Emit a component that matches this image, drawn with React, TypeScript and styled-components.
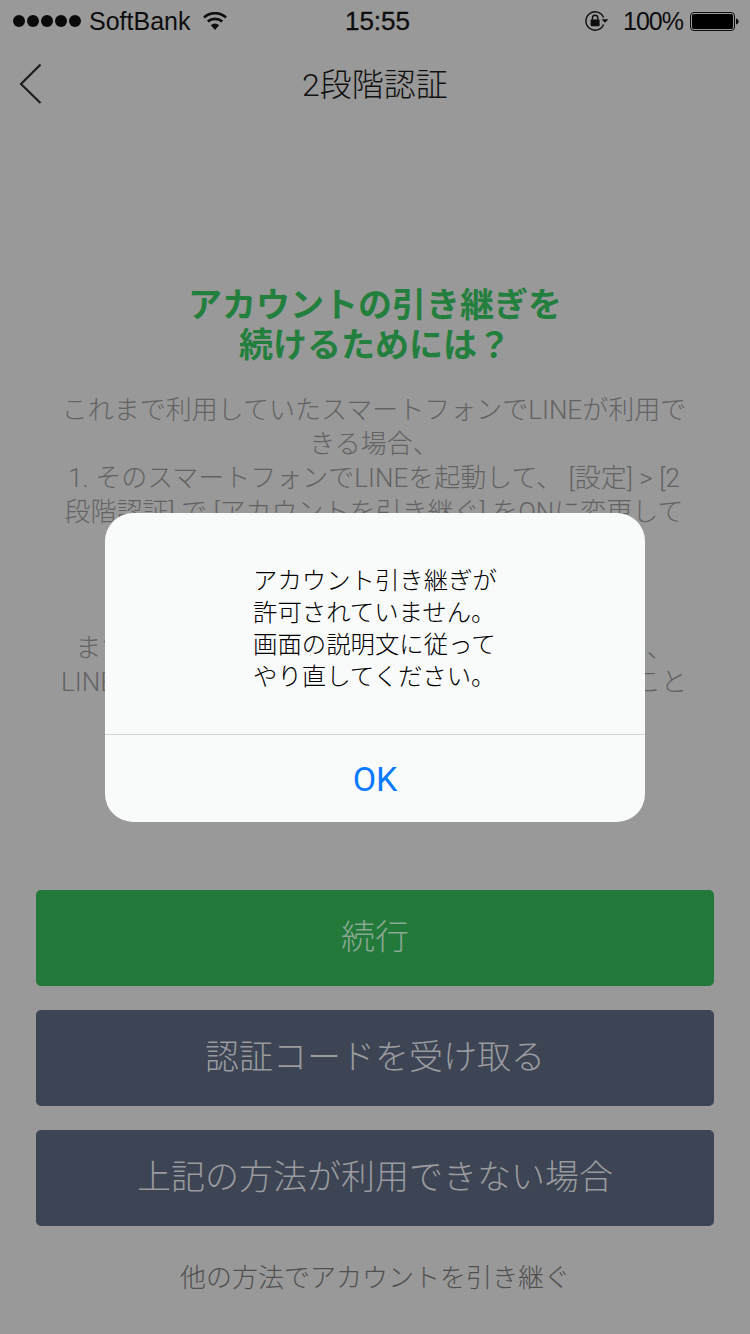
import React from "react";
import styled, { createGlobalStyle } from "styled-components";

const GlobalStyle = createGlobalStyle`
  html, body {
    margin: 0;
    padding: 0;
    background: #999999;
  }
  * {
    box-sizing: border-box;
  }
`;

const FONT = `"Liberation Sans", "Noto Sans CJK JP", sans-serif`;
const LIGHT_FONT = `Roboto, "Noto Sans CJK JP", sans-serif`;

const Screen = styled.div`
  position: relative;
  width: 750px;
  height: 1334px;
  overflow: hidden;
  display: flex;
  flex-direction: column;
  background: #999999;
  font-family: ${FONT};
`;

const StatusBar = styled.div`
  height: 40px;
  padding: 2px 11px 0 13px;
  display: grid;
  grid-template-columns: 1fr auto 1fr;
  align-items: center;
  color: #0d0d0d;
  font-size: 25px;
`;

const StatusLeft = styled.div`
  display: flex;
  align-items: center;
`;

const Dots = styled.div`
  display: flex;
  gap: 2px;
  margin-right: 8px;
`;

const Dot = styled.span`
  width: 12px;
  height: 12px;
  border-radius: 50%;
  background: #0a0a0a;
`;

const Carrier = styled.span`
  margin-right: 13px;
`;

const Clock = styled.span`
  padding-left: 3px;
  font-size: 26px;
  font-weight: 500;
  -webkit-text-stroke: 0.3px #0d0d0d;
`;

const StatusRight = styled.div`
  display: flex;
  align-items: center;
  justify-content: flex-end;
`;

const Percent = styled.span`
  margin: 0 7px 0 14px;
  letter-spacing: -1px;
`;

const NavBar = styled.div`
  position: relative;
  height: 88px;
  display: flex;
  align-items: center;
  justify-content: center;
`;

const BackButton = styled.button`
  position: absolute;
  left: 18px;
  top: 22px;
  width: 26px;
  height: 44px;
  padding: 0;
  border: 0;
  background: none;
`;

const Title = styled.h1`
  margin: 0;
  padding-top: 2px;
  font-family: ${LIGHT_FONT};
  font-size: 32px;
  font-weight: 300;
  line-height: 44px;
  color: #111111;
`;

const Content = styled.main`
  flex: 1;
  padding: 157px 48px 0;
  text-align: center;
`;

const Heading = styled.h2`
  margin: 0 0 28px;
  font-size: 34px;
  line-height: 40px;
  font-weight: 700;
  color: #237f3d;
`;

const BodyLine = styled.p`
  margin: 0;
  height: 34px;
  padding-right: 2px;
  font-family: ${LIGHT_FONT};
  font-size: 26px;
  font-weight: 300;
  line-height: 34px;
  white-space: nowrap;
  color: #636363;
  display: flex;
  justify-content: center;
`;

const Actions = styled.div`
  padding: 0 36px;
  display: flex;
  flex-direction: column;
  gap: 24px;
`;

const ActionButton = styled.button<{ $tone: "green" | "navy" }>`
  height: 96px;
  padding: 0 0 8px;
  border: 0;
  border-radius: 5px;
  font-family: ${FONT};
  font-size: 34px;
  font-weight: 300;
  background: ${(p) => (p.$tone === "green" ? "#22793a" : "#3d4454")};
  color: ${(p) => (p.$tone === "green" ? "#8aa892" : "#999b9f")};
`;

const FooterLink = styled.a`
  display: block;
  height: 108px;
  padding-top: 32px;
  text-align: center;
  font-size: 26px;
  font-weight: 300;
  line-height: 40px;
  color: #505050;
`;

const Scrim = styled.div`
  position: absolute;
  inset: 0;
  display: flex;
  align-items: center;
  justify-content: center;
`;

const Dialog = styled.div`
  width: 540px;
  height: 309px;
  display: flex;
  flex-direction: column;
  border-radius: 28px;
  background: #f9fafa;
`;

const DialogMessage = styled.div`
  height: 222px;
  padding: 52px 0 0 148px;
  border-bottom: 1px solid #d3d4da;
  font-size: 24.4px;
  font-weight: 300;
  line-height: 32px;
  color: #000000;
`;

const MessageLine = styled.div`
  white-space: nowrap;
`;

const DialogButton = styled.button`
  flex: 1;
  padding: 1px 0 0;
  border: 0;
  background: none;
  font-family: Roboto, sans-serif;
  font-size: 34px;
  color: #0a7aff;
`;

const WifiIcon = () => (
  <svg width="24" height="18" viewBox="0 0 24 18">
    <path d="M12 18 7.8 13.2a6.2 6.2 0 0 1 8.4 0Z" fill="#0d0d0d" />
    <path d="M4.8 9.6a11 11 0 0 1 14.4 0" fill="none" stroke="#0d0d0d" strokeWidth="2.7" />
    <path d="M1 5.4a16.6 16.6 0 0 1 22 0" fill="none" stroke="#0d0d0d" strokeWidth="2.7" />
  </svg>
);

const RotationLockIcon = () => (
  <svg width="24" height="20" viewBox="0 0 24 20">
    <path d="M18.6 13.6A9.2 9.2 0 1 1 18.6 6.4" fill="none" stroke="#0d0d0d" strokeWidth="1.4" />
    <path d="M16.6 8.2h6.8l-3.4 3.6Z" fill="#0d0d0d" />
    <rect x="5.6" y="8.6" width="9" height="6.6" rx="1" fill="#0d0d0d" />
    <path d="M7.4 8.8V7a2.7 2.7 0 0 1 5.4 0v1.8" fill="none" stroke="#0d0d0d" strokeWidth="1.4" />
  </svg>
);

const BatteryIcon = () => (
  <svg width="49" height="19" viewBox="0 0 49 19">
    <rect x="0.5" y="0.5" width="44" height="18" rx="3.5" fill="none" stroke="#0d0d0d" />
    <rect x="2" y="2" width="41" height="15" rx="2" fill="#000" />
    <path d="M46 6.5c1.6.3 2.6 1.5 2.6 3s-1 2.7-2.6 3Z" fill="#0d0d0d" />
  </svg>
);

const BackChevron = () => (
  <svg width="26" height="44" viewBox="0 0 26 44">
    <path d="M22.5 2.5 3 22l19.5 19" fill="none" stroke="#1e1e1e" strokeWidth="2.2" />
  </svg>
);

// lines sitting fully behind the dialog are left empty
const bodyLines = [
  "これまで利用していたスマートフォンでLINEが利用で",
  "きる場合、",
  "1. そのスマートフォンでLINEを起動して、 [設定] > [2",
  "段階認証] で [アカウントを引き継ぐ] をONに変更して",
  "",
  "",
  "",
  "また、以前登録した電話番号が利用できる場合は、",
  "LINEに登録した電話番号で認証コードを受け取ること",
];

const messageLines = [
  "アカウント引き継ぎが",
  "許可されていません。",
  "画面の説明文に従って",
  "やり直してください。",
];

const App = () => {
  return (
    <Screen>
      <GlobalStyle />
      <StatusBar>
        <StatusLeft>
          <Dots>
            {[0, 1, 2, 3, 4].map((i) => (
              <Dot key={i} />
            ))}
          </Dots>
          <Carrier>SoftBank</Carrier>
          <WifiIcon />
        </StatusLeft>
        <Clock>15:55</Clock>
        <StatusRight>
          <RotationLockIcon />
          <Percent>100%</Percent>
          <BatteryIcon />
        </StatusRight>
      </StatusBar>
      <NavBar>
        <BackButton aria-label="back">
          <BackChevron />
        </BackButton>
        <Title>2段階認証</Title>
      </NavBar>
      <Content>
        <Heading>
          アカウントの引き継ぎを
          <br />
          続けるためには？
        </Heading>
        {bodyLines.map((line, i) => (
          <BodyLine key={i}>{line}</BodyLine>
        ))}
      </Content>
      <Actions>
        <ActionButton $tone="green">続行</ActionButton>
        <ActionButton $tone="navy">認証コードを受け取る</ActionButton>
        <ActionButton $tone="navy">上記の方法が利用できない場合</ActionButton>
      </Actions>
      <FooterLink>他の方法でアカウントを引き継ぐ</FooterLink>
      <Scrim>
        <Dialog>
          <DialogMessage>
            {messageLines.map((line) => (
              <MessageLine key={line}>{line}</MessageLine>
            ))}
          </DialogMessage>
          <DialogButton>OK</DialogButton>
        </Dialog>
      </Scrim>
    </Screen>
  );
};

export default App;
